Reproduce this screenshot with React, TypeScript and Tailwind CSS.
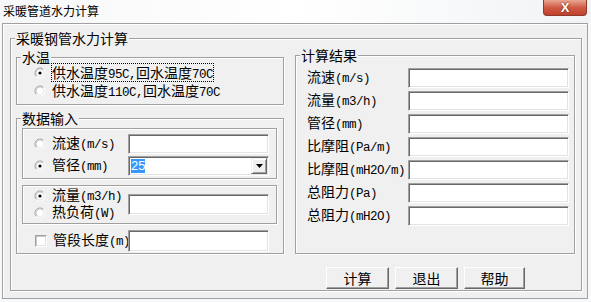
import { ReactNode } from "react";

// split CJK and ASCII so the latin bits get the narrow mono look of SimSun
function T({ s }: { s: string }) {
  const parts = s.split(/([\x20-\x7e]+)/).filter((p) => p !== "");
  return (
    <>
      {parts.map((p, i) =>
        /^[\x20-\x7e]+$/.test(p) ? (
          <span
            key={i}
            className="font-['Liberation_Mono',monospace] text-[12.5px] tracking-[-0.5px]"
          >
            {p}
          </span>
        ) : (
          <span key={i}>{p}</span>
        )
      )}
    </>
  );
}

function Group({
  label,
  className,
  children,
}: {
  label: string;
  className?: string;
  children?: ReactNode;
}) {
  return (
    <div
      className={`relative border border-[#a0a0a0] shadow-[inset_1px_1px_0_#fff,1px_1px_0_#fff] ${className ?? ""}`}
    >
      <span className="absolute -top-[10px] left-[4px] bg-[#f0f0f0] px-[1px] text-[14px] leading-[18px]">
        {label}
      </span>
      {children}
    </div>
  );
}

function Box({ className, children }: { className?: string; children?: ReactNode }) {
  return (
    <div
      className={`border border-[#a0a0a0] shadow-[inset_1px_1px_0_#fff,1px_1px_0_#fff] ${className ?? ""}`}
    >
      {children}
    </div>
  );
}

function Field({ className, children }: { className?: string; children?: ReactNode }) {
  return (
    <div
      className={`shrink-0 bg-white border border-t-[#a0a0a0] border-l-[#a0a0a0] border-r-white border-b-white shadow-[inset_1px_1px_0_#696969,inset_-1px_-1px_0_#e3e3e3] ${className ?? ""}`}
    >
      {children}
    </div>
  );
}

function Radio({ checked }: { checked?: boolean }) {
  return (
    <svg width="12" height="12" viewBox="0 0 12 12" className="shrink-0">
      <circle cx="6" cy="6" r="5" fill="#fff" />
      <path d="M2.46 9.54A5 5 0 0 1 9.54 2.46" fill="none" stroke="#a0a0a0" strokeWidth="1" />
      <path d="M9.54 2.46A5 5 0 0 1 2.46 9.54" fill="none" stroke="#fff" strokeWidth="1" />
      <path d="M3.17 8.83A4 4 0 0 1 8.83 3.17" fill="none" stroke="#c8c8c8" strokeWidth="1" />
      <path d="M8.83 3.17A4 4 0 0 1 3.17 8.83" fill="none" stroke="#e3e3e3" strokeWidth="1" />
      {checked && <circle cx="6" cy="6" r="1.6" fill="#000" />}
    </svg>
  );
}

function Check() {
  return (
    <div className="w-[12px] h-[12px] shrink-0 bg-white border border-t-[#a0a0a0] border-l-[#a0a0a0] border-r-white border-b-white shadow-[inset_1px_1px_0_#c8c8c8,inset_-1px_-1px_0_#e3e3e3]" />
  );
}

function Button({ label, className }: { label: string; className?: string }) {
  return (
    <div
      className={`h-[22px] flex items-center justify-center bg-[#f0f0f0] border border-t-white border-l-white border-r-[#696969] border-b-[#696969] shadow-[inset_-1px_-1px_0_#a0a0a0] text-[14px] leading-[18px] ${className ?? ""}`}
    >
      {label}
    </div>
  );
}

const results = [
  "流速(m/s)",
  "流量(m3/h)",
  "管径(mm)",
  "比摩阻(Pa/m)",
  "比摩阻(mH2O/m)",
  "总阻力(Pa)",
  "总阻力(mH2O)",
];

export default function App() {
  return (
    <div className="w-[591px] h-[302px] flex flex-col bg-[#f7f8f9] text-black font-['Noto_Sans_CJK_SC',sans-serif] overflow-hidden">
      {/* title bar */}
      <div className="h-[23px] flex items-start justify-between bg-gradient-to-r from-[#f6f7f8] via-white to-[#f1f3f5]">
        <span className="pl-[3px] pt-[3px] text-[12px] leading-[15px]">采暖管道水力计算</span>
        <div className="mr-[4px] w-[44px] h-[16px] flex items-center justify-center rounded-b-[4px] border border-t-0 border-[#8d3a2c] bg-gradient-to-b from-[#e9a794] via-[#cf5a45] to-[#c0412c] text-white text-[13px] font-bold leading-none font-['Liberation_Sans',sans-serif] [text-shadow:0_0_2px_#5a1a10]">
          X
        </div>
      </div>

      {/* client frame */}
      <div className="ml-[2px] w-[586px] h-[276px] bg-[#f0f0f0] border border-[#a0a0a0] shadow-[inset_1px_1px_0_#fff]">
        <Group label="采暖钢管水力计算" className="ml-[7px] mt-[14px] w-[572px] h-[253px]">
          <div className="flex items-start pl-[5px]">
            {/* left column */}
            <div className="w-[268px] mt-[18px] flex flex-col">
              <Group label="水温" className="h-[48px]">
                <div className="flex flex-col pt-[5px] pl-[17px] text-[14px]">
                  <div className="flex items-center h-[19px]">
                    <Radio checked />
                    <span className="ml-[5px] h-[19px] border border-dotted border-black leading-[17px] overflow-hidden">
                      <T s="供水温度95C,回水温度70C" />
                    </span>
                  </div>
                  <div className="flex items-center h-[18px]">
                    <Radio />
                    <span className="ml-[6px] leading-[18px]">
                      <T s="供水温度110C,回水温度70C" />
                    </span>
                  </div>
                </div>
              </Group>

              <Group label="数据输入" className="mt-[13px] h-[136px]">
                <div className="flex flex-col pl-[5px] pt-[9px] text-[14px]">
                  <Box className="w-[255px] h-[51px] flex flex-col gap-[2px] pt-[5px] pl-[11px]">
                    <div className="flex items-center h-[20px]">
                      <Radio />
                      <span className="ml-[6px] w-[76px] min-w-0 leading-[17px] whitespace-nowrap">
                        <T s="流速(m/s)" />
                      </span>
                      <Field className="w-[141px] h-[20px]" />
                    </div>
                    <div className="flex items-center h-[20px]">
                      <Radio checked />
                      <span className="ml-[6px] w-[76px] min-w-0 leading-[17px] whitespace-nowrap">
                        <T s="管径(mm)" />
                      </span>
                      <Field className="w-[141px] h-[20px] flex items-center pl-[2px] pr-[1px]">
                        <span className="bg-[#3399ff] text-white text-[13px] leading-[14px] font-['Liberation_Sans',sans-serif]">
                          25
                        </span>
                        <div className="ml-auto w-[16px] h-[16px] flex items-center justify-center bg-[#f0f0f0] border border-t-[#f0f0f0] border-l-[#f0f0f0] border-r-[#696969] border-b-[#696969] shadow-[inset_1px_1px_0_#fff,inset_-1px_-1px_0_#a0a0a0]">
                          <svg width="7" height="4" viewBox="0 0 7 4">
                            <path d="M0 0H7L3.5 4Z" fill="#000" />
                          </svg>
                        </div>
                      </Field>
                    </div>
                  </Box>

                  <Box className="mt-[6px] w-[255px] h-[39px] flex items-start pl-[11px]">
                    <div className="w-[94px] flex flex-col pt-[1px]">
                      <div className="flex items-center h-[17px]">
                        <Radio checked />
                        <span className="ml-[6px] leading-[17px]">
                          <T s="流量(m3/h)" />
                        </span>
                      </div>
                      <div className="flex items-center h-[17px]">
                        <Radio />
                        <span className="ml-[6px] leading-[17px]">
                          <T s="热负荷(W)" />
                        </span>
                      </div>
                    </div>
                    <Field className="mt-[8px] w-[141px] h-[21px]" />
                  </Box>

                  <div className="mt-[6px] flex items-center h-[22px] pl-[13px]">
                    <Check />
                    <span className="ml-[6px] w-[75px] min-w-0 leading-[17px] whitespace-nowrap">
                      <T s="管段长度(m)" />
                    </span>
                    <Field className="w-[141px] h-[22px]" />
                  </div>
                </div>
              </Group>
            </div>

            {/* right column */}
            <div className="ml-[11px] mt-[16px] w-[280px] flex flex-col">
              <Group label="计算结果" className="h-[199px]">
                <div className="flex flex-col gap-[3px] pt-[12px] pl-[11px] text-[14px]">
                  {results.map((r) => (
                    <div key={r} className="flex items-center h-[20px]">
                      <span className="w-[101px] min-w-0 leading-[17px] whitespace-nowrap">
                        <T s={r} />
                      </span>
                      <Field className="w-[161px] h-[20px]" />
                    </div>
                  ))}
                </div>
              </Group>
              <div className="mt-[13px] pl-[31px] flex gap-[6px]">
                <Button label="计算" className="w-[63px]" />
                <Button label="退出" className="w-[63px]" />
                <Button label="帮助" className="w-[61px]" />
              </div>
            </div>
          </div>
        </Group>
      </div>
    </div>
  );
}
